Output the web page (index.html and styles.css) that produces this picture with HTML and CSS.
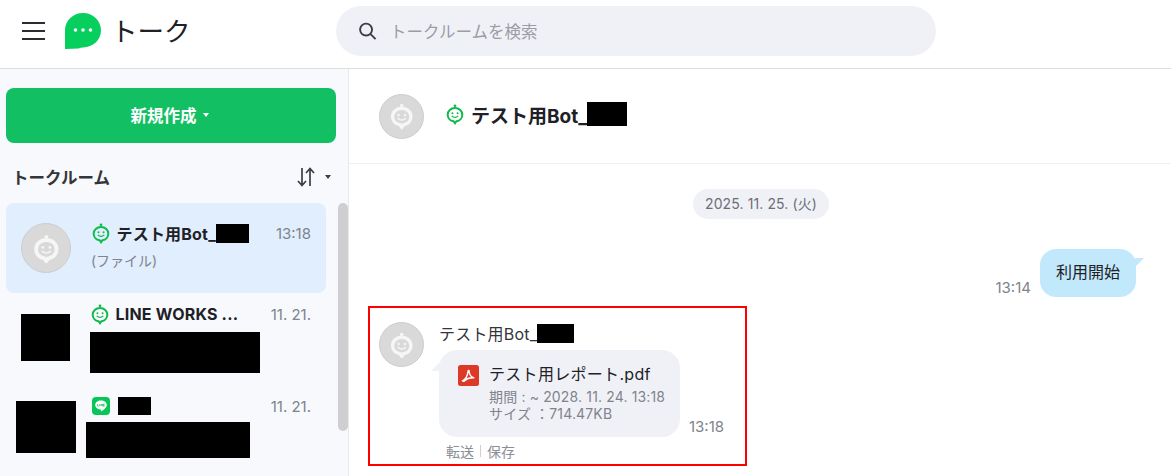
FILE: index.html
```html
<!DOCTYPE html>
<html lang="ja">
<head>
  <meta charset="UTF-8">
  <title>トーク</title>
  <link rel="stylesheet" href="styles.css">
</head>
<body>
<svg class="defs" width="0" height="0">
  <symbol id="bot-face" viewBox="0 0 24 24">
    <circle cx="12" cy="3" r="1.5" fill="currentColor"/>
    <path d="M12 5.5c4.6 0 8 3.1 8 7.2 0 3.7-2.8 6.600-6.400 7.100L12 22l-1.600-2.200C6.800 19.300 4 16.400 4 12.700c0-4.100 3.400-7.200 8-7.200z" fill="none" stroke="currentColor"/>
    <circle cx="9.200" cy="11.300" r="1.100" fill="currentColor"/>
    <circle cx="14.800" cy="11.300" r="1.100" fill="currentColor"/>
    <path d="M8.800 14.300c1.600 1.800 4.800 1.800 6.400 0" fill="none" stroke="currentColor" stroke-width="1.300" stroke-linecap="round"/>
  </symbol>
</svg>

<header class="top-bar">
  <button class="menu-btn" aria-label="メニュー">
    <span></span><span></span><span></span>
  </button>
  <svg class="logo" viewBox="0 0 36 36">
    <path d="M18 0c9.900 0 18 7.700 18 17.300 0 9.800-8 17-18 17.300-1.500 0-3 .2-4.500.8L1 36c-.6.2-1 0-1-.7V17.300C0 7.700 8.100 0 18 0z" fill="#06cf5e"/>
    <circle cx="10.500" cy="17" r="1.800" fill="#fff"/>
    <circle cx="18" cy="17" r="1.800" fill="#fff"/>
    <circle cx="25.500" cy="17" r="1.800" fill="#fff"/>
  </svg>
  <h1 class="page-title">トーク</h1>
  <div class="search-box">
    <svg class="search-icon" viewBox="0 0 20 20">
      <circle cx="8.500" cy="8.500" r="6.300" fill="none" stroke="#3c3e45" stroke-width="2"/>
      <path d="M13 13l5.500 5.500" fill="none" stroke="#3c3e45" stroke-width="2"/>
    </svg>
    <span class="search-text">トークルームを検索</span>
  </div>
</header>

<div class="layout">
  <aside class="sidebar">
    <button class="new-btn">新規作成<i class="caret caret-white"></i></button>

    <div class="rooms-head">
      <span class="rooms-title">トークルーム</span>
      <span class="sort">
        <svg class="sort-icon" viewBox="0 0 20 20">
          <path d="M6 1v17M2 14l4 4.500L10 14M14 19V2M10 6l4-4.500L18 6" fill="none" stroke="#3c3e45" stroke-width="1.700"/>
        </svg>
        <i class="caret caret-dark"></i>
      </span>
    </div>

    <div class="rooms-wrap">
      <ul class="rooms">
        <li class="room room-active">
          <div class="avatar avatar-lg"><svg class="avatar-face"><use href="#bot-face"/></svg></div>
          <div class="room-body">
            <div class="room-top">
              <svg class="bot-mark"><use href="#bot-face"/></svg>
              <span class="room-name">テスト用Bot_</span>
              <span class="mask mask-name"></span>
              <span class="room-time">13:18</span>
            </div>
            <div class="room-preview">(ファイル)</div>
          </div>
        </li>
        <li class="room room-second">
          <div class="mask mask-avatar-a"></div>
          <div class="room-body">
            <div class="room-top">
              <svg class="bot-mark"><use href="#bot-face"/></svg>
              <span class="room-name">LINE WORKS ...</span>
              <span class="room-time">11. 21.</span>
            </div>
            <div class="mask mask-preview-a"></div>
          </div>
        </li>
        <li class="room room-third">
          <div class="mask mask-avatar-b"></div>
          <div class="room-body">
            <div class="room-top">
              <svg class="line-mark" viewBox="0 0 18 18">
                <rect width="18" height="18" rx="4" fill="#06c755"/>
                <path d="M9 3.500c3.300 0 5.800 2 5.800 4.500 0 2.600-3.500 5-5.500 6.300-.4.200-.5 0-.4-.4l.1-1.300C5.900 12.400 3.200 10.500 3.200 8c0-2.500 2.500-4.500 5.800-4.500z" fill="#fff"/>
                <path d="M5.500 7v2.200h1.200M7.700 7v2.200M9 9.200V7l1.500 2.200V7M12.700 7h-1.200v2.200h1.200M11.500 8.100h1.100" fill="none" stroke="#06c755" stroke-width=".7"/>
              </svg>
              <span class="mask mask-name-b"></span>
              <span class="room-time">11. 21.</span>
            </div>
            <div class="mask mask-preview-b"></div>
          </div>
        </li>
      </ul>
      <div class="scroll-track"><div class="scroll-thumb"></div></div>
    </div>
  </aside>

  <main class="chat">
    <div class="chat-head">
      <div class="avatar avatar-md"><svg class="avatar-face"><use href="#bot-face"/></svg></div>
      <svg class="bot-mark chat-mark"><use href="#bot-face"/></svg>
      <span class="chat-title">テスト用Bot_</span>
      <span class="mask mask-title"></span>
    </div>

    <div class="messages">
      <div class="date-row"><span class="date-pill">2025. 11. 25. (火)</span></div>

      <div class="msg-sent">
        <span class="msg-time">13:14</span>
        <div class="bubble-sent">利用開始</div>
      </div>

      <div class="highlight">
        <div class="avatar avatar-md"><svg class="avatar-face"><use href="#bot-face"/></svg></div>
        <div class="msg-body">
          <div class="sender"><span>テスト用Bot_</span><span class="mask mask-sender"></span></div>
          <div class="msg-line">
            <div class="bubble-file">
              <svg class="pdf-icon" viewBox="0 0 21 21">
                <rect width="21" height="21" rx="2.500" fill="#dc3a26"/>
                <path d="M4.500 15.800c2.800-1.200 5-4.600 5.600-9.600.1-.9 1-.9 1 0 .2 3.500 1.700 5.800 5.200 6.700-3.800-.4-7.500.6-10 3-.7.600-1.500.4-1.800-.1z" fill="none" stroke="#fff" stroke-width="1.400"/>
              </svg>
              <div class="file-info">
                <div class="file-name">テスト用レポート.pdf</div>
                <div class="file-meta">期間 : ~ 2028. 11. 24. 13:18</div>
                <div class="file-meta">サイズ ：714.47KB</div>
              </div>
            </div>
            <span class="msg-time">13:18</span>
          </div>
          <div class="file-actions">
            <span>転送</span><i class="action-sep"></i><span>保存</span>
          </div>
        </div>
      </div>
    </div>
  </main>
</div>
</body>
</html>
```

FILE: styles.css
```css
* {
  box-sizing: border-box;
  margin: 0;
  padding: 0;
}

:root {
  --text-color: #202126;
  --gray-text: #80838c;
  --soft-bg: #f0f1f7;
  --green: #12bf63;
  --mark-green: #10bb4d;
}

html, body {
  height: 476px;
  overflow: hidden;
}

body {
  font-family: Inter, "Noto Sans CJK JP", sans-serif;
  color: var(--text-color);
  background-color: #fff;
}

.defs {
  display: block;
  height: 0;
}

.mask {
  display: block;
  background-color: #000;
}

/* top bar */
.top-bar {
  display: flex;
  align-items: center;
  height: 69px;
  padding: 0 0 6px 22px;
  border-bottom: 1px solid #dedee0;
}

.menu-btn {
  display: flex;
  flex-direction: column;
  justify-content: space-between;
  width: 23px;
  height: 18px;
  border: none;
  background: none;
}

.menu-btn span {
  display: block;
  height: 2px;
  background-color: #2c2d33;
}

.logo {
  width: 36px;
  height: 36px;
  margin-left: 20px;
}

.page-title {
  width: 225px;
  margin-left: 10px;
  font-size: 26.5px;
  font-weight: 400;
  line-height: 36px;
}

.search-box {
  display: flex;
  align-items: center;
  width: 600px;
  height: 50px;
  padding-left: 22px;
  background-color: var(--soft-bg);
  border-radius: 25px;
}

.search-icon {
  width: 19px;
  height: 20px;
}

.search-text {
  margin-left: 13px;
  font-size: 16.5px;
  color: #9b9da5;
}

/* sidebar */
.layout {
  display: flex;
  height: 407px;
}

.sidebar {
  flex: 0 0 349px;
  padding: 19px 0 0 6px;
  background-color: #f8f9fc;
  border-right: 1px solid #e9e9ec;
  overflow: hidden;
}

.new-btn {
  display: flex;
  align-items: center;
  justify-content: center;
  width: 330px;
  height: 55px;
  padding: 0 3px 2px 0;
  border: none;
  border-radius: 8px;
  background-color: var(--green);
  color: #fff;
  font-family: inherit;
  font-size: 16.5px;
  font-weight: 700;
}

.caret {
  display: inline-block;
  width: 0;
  height: 0;
  border-left: 3.5px solid transparent;
  border-right: 3.5px solid transparent;
}

.caret-white {
  margin-left: 6px;
  border-top: 4px solid #fff;
}

.caret-dark {
  margin-left: 9px;
  border-top: 4px solid #3c3e45;
}

.rooms-head {
  display: flex;
  align-items: center;
  justify-content: space-between;
  height: 60px;
  padding: 7px 17px 0 6px;
}

.rooms-title {
  font-size: 16.5px;
  font-weight: 700;
  color: #34353b;
}

.sort {
  display: flex;
  align-items: center;
}

.sort-icon {
  width: 20px;
  height: 20px;
}

.rooms-wrap {
  display: flex;
}

.rooms {
  flex: 0 0 320px;
  list-style: none;
}

.room {
  display: flex;
  height: 90px;
}

.room-active {
  padding: 20px 15px;
  background-color: #e0eefd;
  border-radius: 8px;
}

.room-second {
  padding: 10px 15px 0;
}

.room-third {
  padding: 12px 15px 0 10px;
}

.room-body {
  flex: 1;
  min-width: 0;
}

.room-active .room-body {
  margin: -1px 0 0 20px;
}

.room-second .room-body {
  margin-left: 20px;
}

.room-third .room-body {
  margin-left: 10px;
}

.room-top {
  display: flex;
  align-items: center;
  height: 22px;
}

.bot-mark {
  flex: none;
  width: 22px;
  height: 22px;
  margin: 0 -1px;
  color: var(--mark-green);
  stroke-width: 2.2;
}

.room-name {
  margin-left: 5.5px;
  font-size: 16px;
  font-weight: 700;
  letter-spacing: .2px;
  white-space: nowrap;
}

.room-time {
  margin-left: auto;
  font-size: 15px;
  color: var(--gray-text);
}

.room-preview {
  margin-top: 6px;
  font-size: 14px;
  color: var(--gray-text);
}

.line-mark {
  flex: none;
  width: 18px;
  height: 18px;
  margin-left: 6px;
}

.mask-name {
  width: 33px;
  height: 19px;
  margin-top: 1px;
}

.mask-avatar-a {
  flex: none;
  width: 49px;
  height: 47px;
  margin-top: 11px;
}

.mask-preview-a {
  width: 170px;
  height: 41px;
  margin-top: 7px;
}

.mask-avatar-b {
  flex: none;
  width: 60px;
  height: 52px;
  margin-top: 6px;
}

.mask-name-b {
  width: 33px;
  height: 18px;
  margin-left: 8px;
}

.mask-preview-b {
  width: 164px;
  height: 36px;
  margin-top: 5px;
}

.scroll-track {
  flex: 0 0 10px;
  margin-left: 12px;
}

.scroll-thumb {
  height: 228px;
  background-color: #cfcfd2;
  border-radius: 5px;
}

.avatar {
  display: flex;
  flex: none;
  align-items: center;
  justify-content: center;
  background-color: #d9d9d9;
  border: 1px solid #cdcdcd;
  border-radius: 50%;
}

.avatar-lg {
  width: 50px;
  height: 50px;
}

.avatar-md {
  width: 45px;
  height: 45px;
}

.avatar-face {
  width: 64%;
  height: 64%;
  color: #f6f6f6;
  stroke-width: 3;
}

/* chat */
.chat {
  flex: 1;
  min-width: 0;
}

.chat-head {
  display: flex;
  align-items: center;
  height: 95px;
  padding-left: 30px;
  border-bottom: 1px solid #f1f1f3;
}

.chat-mark {
  margin: -4px 0 0 20px;
}

.chat-title {
  margin: -4px 0 0 5px;
  font-size: 19px;
  font-weight: 700;
  white-space: nowrap;
}

.mask-title {
  width: 40px;
  height: 24px;
  margin-top: -5px;
}

.messages {
  padding: 25px 35px 0 19px;
}

.date-row {
  display: flex;
  justify-content: center;
  padding-left: 18px;
}

.date-pill {
  padding: 0 12.5px;
  height: 30px;
  line-height: 29px;
  font-size: 14px;
  letter-spacing: .1px;
  color: #6c6e76;
  background-color: var(--soft-bg);
  border-radius: 15px;
}

.msg-sent {
  display: flex;
  align-items: flex-end;
  justify-content: flex-end;
  margin-top: 30px;
}

.msg-time {
  font-size: 15px;
  line-height: 18px;
  color: var(--gray-text);
}

.bubble-sent {
  position: relative;
  margin-left: 9px;
  padding: 0 16px;
  height: 48px;
  line-height: 47px;
  font-size: 16px;
  background-color: #c2e8fc;
  border-radius: 16px;
}

.bubble-sent::after {
  content: "";
  position: absolute;
  top: 9px;
  right: -8px;
  border-top: 9px solid #c2e8fc;
  border-right: 9px solid transparent;
}

.highlight {
  display: flex;
  width: 379px;
  height: 160px;
  margin-top: 9px;
  padding: 14px 0 0 9px;
  border: 2px solid #ff0000;
}

.msg-body {
  margin-left: 15px;
  min-width: 0;
}

.sender {
  display: flex;
  align-items: center;
  height: 22px;
  font-size: 16px;
  letter-spacing: .2px;
  color: #34353b;
}

.mask-sender {
  width: 37px;
  height: 19px;
}

.msg-line {
  display: flex;
  align-items: flex-end;
  margin-top: 6px;
}

.bubble-file {
  position: relative;
  display: flex;
  width: 241px;
  height: 87px;
  padding: 15px 0 0 19px;
  background-color: var(--soft-bg);
  border-radius: 18px;
}

.bubble-file::before {
  content: "";
  position: absolute;
  top: 12px;
  left: -8px;
  border-top: 9px solid transparent;
  border-right: 9px solid var(--soft-bg);
}

.pdf-icon {
  flex: none;
  width: 21px;
  height: 21px;
}

.file-info {
  margin-left: 10px;
  white-space: nowrap;
}

.file-name {
  margin-bottom: 5px;
  font-size: 16px;
  line-height: 18px;
  letter-spacing: .3px;
}

.file-meta {
  font-size: 14px;
  line-height: 17px;
  letter-spacing: .15px;
  color: var(--gray-text);
}

.msg-line .msg-time {
  margin-left: 9px;
  margin-bottom: 1px;
}

.file-actions {
  display: flex;
  align-items: center;
  height: 20px;
  margin-top: 4px;
  padding-left: 7px;
  font-size: 14px;
  color: #8c8e96;
}

.action-sep {
  width: 1px;
  height: 12px;
  margin: 0 6px;
  background-color: #cfcfd2;
}
```
